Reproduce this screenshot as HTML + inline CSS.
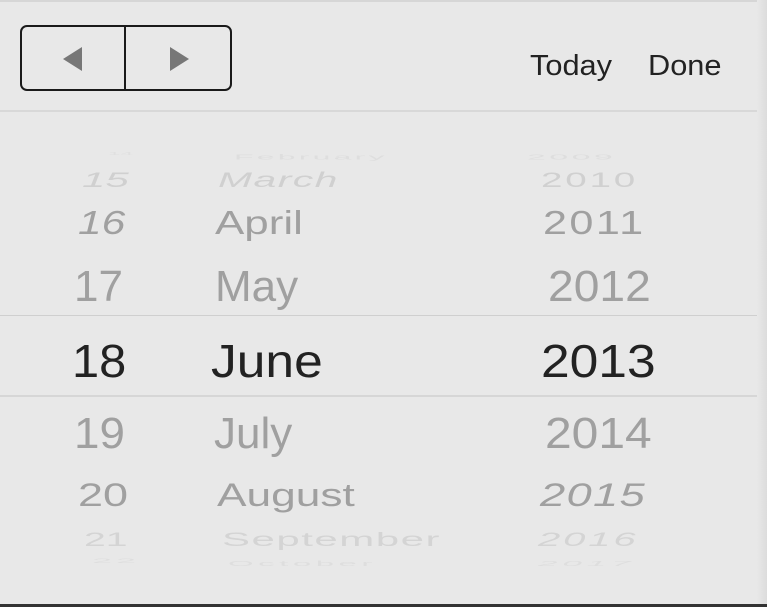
<!DOCTYPE html>
<html><head><meta charset="utf-8"><style>
body{margin:0;width:767px;height:607px;overflow:hidden;background:#e8e8e8;font-family:"Liberation Sans",sans-serif;position:relative}
.t{position:absolute;line-height:1;white-space:nowrap;transform-origin:0 83%}
</style></head><body>
<div style="position:absolute;left:0;top:0;width:767px;height:2px;background:#d6d6d6"></div>
<div style="position:absolute;right:0;top:0;width:10px;height:607px;background:linear-gradient(90deg,#e8e8e8,#dcdcdc)"></div>
<div style="position:absolute;left:0;top:604px;width:767px;height:3px;background:#333"></div>
<div style="position:absolute;left:20px;top:25px;width:208px;height:62px;border:2px solid #1a1a1a;border-radius:7px"></div>
<div style="position:absolute;left:124px;top:26px;width:2px;height:64px;background:#1a1a1a"></div>
<svg style="position:absolute;left:0;top:0" width="240" height="100"><polygon points="63,59 82,47 82,71" fill="#777"/><polygon points="170,47 189,59 170,71" fill="#777"/></svg>
<div class="t" style="left:530px;top:52px;font-size:29px;color:#222;transform:scaleX(1.06)">Today</div>
<div class="t" style="left:648px;top:52px;font-size:29px;color:#222;transform:scaleX(1.06)">Done</div>
<div style="position:absolute;left:0;top:110px;width:757px;height:2px;background:#d8d8d8"></div>
<div style="position:absolute;left:0;top:315px;width:757px;height:1px;background:#cfcfcf"></div>
<div style="position:absolute;left:0;top:395px;width:757px;height:2px;background:#d6d6d6"></div>

<div class="t" style="left:108px;top:143px;font-size:14px;color:#e0e0e0;transform:scale(1.6,.35)">14</div>
<div class="t" style="left:234px;top:143px;font-size:20px;color:#dedede;transform:scale(1.6,.35);letter-spacing:2px">February</div>
<div class="t" style="left:527px;top:143px;font-size:20px;color:#dedede;transform:scale(1.7,.35);letter-spacing:2px">2009</div>

<div class="t" style="left:82px;top:164px;font-size:28px;color:#d0d0d0;font-style:italic;transform:scale(1.5,.75)">15</div>
<div class="t" style="left:218px;top:164px;font-size:28px;color:#d0d0d0;font-style:italic;transform:scale(1.46,.75);letter-spacing:1px">March</div>
<div class="t" style="left:541px;top:164px;font-size:28px;color:#d0d0d0;transform:scale(1.38,.75);letter-spacing:2px">2010</div>

<div class="t" style="left:78px;top:204px;font-size:36px;color:#a0a0a0;font-style:italic;transform:scale(1.18,.92)">16</div>
<div class="t" style="left:215px;top:204px;font-size:36px;color:#a0a0a0;transform:scale(1.22,.92)">April</div>
<div class="t" style="left:543px;top:204px;font-size:36px;color:#a0a0a0;transform:scale(1.2,.92);letter-spacing:2px">2011</div>

<div class="t" style="left:74px;top:265px;font-size:44px;color:#a0a0a0">17</div>
<div class="t" style="left:215px;top:265px;font-size:44px;color:#a0a0a0">May</div>
<div class="t" style="left:548px;top:265px;font-size:44px;color:#a0a0a0;transform:scaleX(1.05)">2012</div>

<div class="t" style="left:72px;top:338px;font-size:46px;color:#222;transform:scaleX(1.06)">18</div>
<div class="t" style="left:211px;top:338px;font-size:46px;color:#222;transform:scaleX(1.12)">June</div>
<div class="t" style="left:541px;top:338px;font-size:46px;color:#222;transform:scaleX(1.12)">2013</div>

<div class="t" style="left:74px;top:412px;font-size:44px;color:#a0a0a0;transform:scaleX(1.04)">19</div>
<div class="t" style="left:214px;top:412px;font-size:44px;color:#a0a0a0">July</div>
<div class="t" style="left:545px;top:412px;font-size:44px;color:#a0a0a0;transform:scaleX(1.09)">2014</div>

<div class="t" style="left:78px;top:476px;font-size:36px;color:#a0a0a0;transform:scale(1.25,.9)">20</div>
<div class="t" style="left:217px;top:476px;font-size:36px;color:#a0a0a0;transform:scale(1.23,.9)">August</div>
<div class="t" style="left:540px;top:476px;font-size:36px;color:#a0a0a0;font-style:italic;transform:scale(1.26,.9);letter-spacing:1px">2015</div>

<div class="t" style="left:84px;top:523px;font-size:28px;color:#d4d4d4;transform:scale(1.4,.7)">21</div>
<div class="t" style="left:222px;top:523px;font-size:28px;color:#d4d4d4;transform:scale(1.5,.7);letter-spacing:1px">September</div>
<div class="t" style="left:538px;top:523px;font-size:28px;color:#d4d4d4;font-style:italic;transform:scale(1.43,.7);letter-spacing:2px">2016</div>

<div class="t" style="left:92px;top:548px;font-size:18px;color:#dedede;transform:scale(2,.35);letter-spacing:2px">22</div>
<div class="t" style="left:228px;top:548px;font-size:22px;color:#dedede;transform:scale(1.5,.35);letter-spacing:3px">October</div>
<div class="t" style="left:538px;top:548px;font-size:22px;color:#dedede;font-style:italic;transform:scale(1.6,.35);letter-spacing:3px">2017</div>
</body></html>
